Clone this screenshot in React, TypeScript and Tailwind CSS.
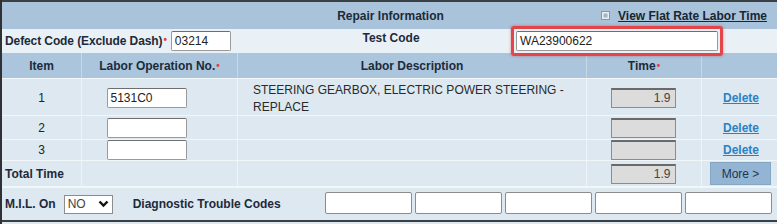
import React from 'react';

const cols = 'grid grid-cols-[80px_156px_349px_115px_1fr]';

function TextBox({ value = '', className = '' }: { value?: string; className?: string }) {
    return (
        <div className={`h-[20px] bg-white border border-[#9a9a9a] border-t-[#6e6e6e] rounded-[2px] px-[3px] flex items-center text-[12px] text-[#222] ${className}`}>
            {value}
        </div>
    );
}

function TimeBox({ value = '' }: { value?: string }) {
    return (
        <div className="h-[20px] w-[65px] bg-[#dcdcdc] border border-[#8c8c8c] border-t-2 border-t-[#6a6a6a] flex items-center justify-end pr-[4px] text-[12px] text-[#444]">
            {value}
        </div>
    );
}

function Req() {
    return <span className="text-[#e0443c] text-[10px] ml-[1px] align-top">•</span>;
}

function DeleteLink() {
    return <span className="text-[#2a82c4] underline font-bold text-[12px]">Delete</span>;
}

function ItemRow({ n, op, desc, time, h }: { n: string; op?: string; desc?: React.ReactNode; time?: string; h: string }) {
    return (
        <div className={`${cols} ${h} bg-[#dde8f0] border-t border-[#f1f6f9]`}>
            <div className="flex items-center justify-center border-r border-[#eef4f8] text-[12px] text-[#222]">{n}</div>
            <div className="flex items-center justify-center border-r border-[#eef4f8] pr-[26px]">
                <TextBox value={op} className="w-[80px]" />
            </div>
            <div className="flex items-start pl-[15px] pt-[3px] border-r border-[#eef4f8] text-[12px] leading-[17px] text-[#2a2a2a]">
                {desc}
            </div>
            <div className="flex items-center justify-center border-r border-[#eef4f8] pr-[2px]">
                <TimeBox value={time} />
            </div>
            <div className="flex items-center justify-end pr-[18px]">
                <DeleteLink />
            </div>
        </div>
    );
}

export default function App() {
    return (
        <div className="w-[777px] h-[224px] bg-[#dde8f0] border-l-2 border-[#2e3236] overflow-hidden" style={{ fontFamily: '"Liberation Sans", Arial, sans-serif' }}>
            {/* Title bar */}
            <div className="h-[29px] bg-[#a8c3da] border-t-2 border-[#3a3f44] grid grid-cols-[1fr_auto_1fr] items-center">
                <div />
                <div className="font-bold text-[12px] text-[#1d2a3a] pl-[2px]">Repair Information</div>
                <div className="flex items-center justify-end pr-[10px] gap-[8px]">
                    <svg width="9" height="9" viewBox="0 0 9 9">
                        <rect x="0.5" y="0.5" width="8" height="8" fill="#e8eef3" stroke="#8a96a2" />
                        <rect x="2.5" y="2.5" width="4" height="4" fill="#a9b4be" />
                    </svg>
                    <span className="font-bold text-[12px] text-[#1a2533] underline">View Flat Rate Labor Time</span>
                </div>
            </div>

            {/* Defect / Test code */}
            <div className="h-[24px] bg-[#eaf1f6] grid grid-cols-[236px_272px_1fr] items-center">
                <div className="flex items-center pl-[3px] gap-[4px]">
                    <span className="font-bold text-[12px] text-[#1d2a3a] whitespace-nowrap tracking-[-0.1px]">Defect Code (Exclude Dash)<Req /></span>
                    <TextBox value="03214" className="w-[60px]" />
                </div>
                <div className="text-center font-bold text-[12px] text-[#1d2a3a] pb-[6px] pl-[34px]">Test Code</div>
                <div className="pl-[6px]">
                    <div className="relative w-[202px]">
                        <TextBox value="WA23900622" className="w-[202px]" />
                        <div className="absolute -inset-[5px] border-[3px] border-[#e2454a] rounded-[3px] shadow-[0_0_3px_rgba(200,40,40,0.5)]" />
                    </div>
                </div>
            </div>

            {/* Column headers */}
            <div className={`${cols} h-[25px] bg-[#aac5dc] font-bold text-[12px] text-[#1d2a3a]`}>
                <div className="flex items-center justify-center border-r border-[#c8d8e5]">Item</div>
                <div className="flex items-center justify-center border-r border-[#c8d8e5]">Labor Operation No.<Req /></div>
                <div className="flex items-center justify-center border-r border-[#c8d8e5]">Labor Description</div>
                <div className="flex items-center justify-center border-r border-[#c8d8e5]">Time<Req /></div>
                <div />
            </div>

            <ItemRow
                n="1"
                op="5131C0"
                time="1.9"
                h="h-[37px]"
                desc={<span>STEERING GEARBOX, ELECTRIC POWER STEERING -<br />REPLACE</span>}
            />
            <ItemRow n="2" h="h-[24px]" />
            <ItemRow n="3" h="h-[21px]" />

            {/* Total */}
            <div className={`${cols} h-[26px] bg-[#dde8f0] border-t border-[#f1f6f9]`}>
                <div className="flex items-center pl-[3px] border-r border-[#eef4f8] font-bold text-[12px] text-[#1d2a3a]">Total Time</div>
                <div className="border-r border-[#eef4f8]" />
                <div className="border-r border-[#eef4f8]" />
                <div className="flex items-center justify-center border-r border-[#eef4f8] pr-[2px]">
                    <TimeBox value="1.9" />
                </div>
                <div className="flex items-center justify-end pr-[6px]">
                    <div className="w-[61px] h-[23px] bg-[#93b5d3] border border-[#84a7c6] flex items-center justify-center text-[12px] text-[#1d3550]">More &gt;</div>
                </div>
            </div>

            {/* MIL / DTC */}
            <div className="h-[36px] bg-[#dde8f0] border-t-2 border-[#f1f6f9] border-b-2 border-b-[#3a3f44] flex items-center pl-[3px]">
                <span className="font-bold text-[12px] text-[#1d2a3a]">M.I.L. On</span>
                <div className="ml-[8px] w-[49px] h-[19px] bg-white border border-[#8c8c8c] flex items-center justify-between px-[3px] text-[12px] text-[#444]">
                    <span>NO</span>
                    <svg width="11" height="8" viewBox="0 0 11 8">
                        <path d="M1.5 1.5 L5.5 5.5 L9.5 1.5" fill="none" stroke="#111" strokeWidth="2.4" />
                    </svg>
                </div>
                <span className="ml-[20px] font-bold text-[12px] text-[#1d2a3a]">Diagnostic Trouble Codes</span>
                <div className="ml-auto mr-[5px] mb-[2px] flex gap-[3px]">
                    {[0, 1, 2, 3, 4].map(i => (
                        <div key={i} className="w-[87px] h-[22px] bg-white border border-[#8c8c8c] rounded-[2px]" />
                    ))}
                </div>
            </div>
        </div>
    );
}
